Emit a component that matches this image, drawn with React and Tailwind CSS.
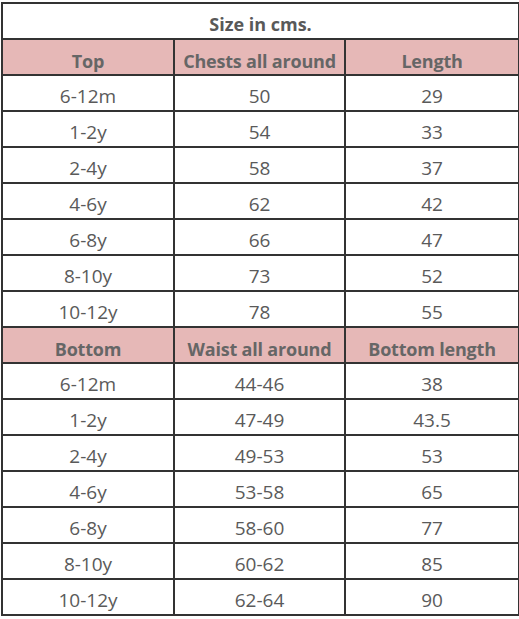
const top = [
  ["6-12m", "50", "29"],
  ["1-2y", "54", "33"],
  ["2-4y", "58", "37"],
  ["4-6y", "62", "42"],
  ["6-8y", "66", "47"],
  ["8-10y", "73", "52"],
  ["10-12y", "78", "55"],
];

const bottom = [
  ["6-12m", "44-46", "38"],
  ["1-2y", "47-49", "43.5"],
  ["2-4y", "49-53", "53"],
  ["4-6y", "53-58", "65"],
  ["6-8y", "58-60", "77"],
  ["8-10y", "60-62", "85"],
  ["10-12y", "62-64", "90"],
];

function HeaderRow({ cells }) {
  return (
    <tr className="h-[36px] bg-[#e6b8b7]">
      {cells.map((c, i) => (
        <td
          key={i}
          className="border-2 border-[#333] align-bottom pb-[4px] text-center text-[18px] font-bold tracking-[-0.2px] text-[#666]"
        >
          {c}
        </td>
      ))}
    </tr>
  );
}

function DataRow({ cells }) {
  return (
    <tr className="h-[36px]">
      {cells.map((c, i) => (
        <td
          key={i}
          className="border-2 border-[#333] align-bottom pb-[4px] text-center text-[19px] text-[#5a5a5a]"
        >
          {c}
        </td>
      ))}
    </tr>
  );
}

export default function App() {
  return (
    <div
      className="w-[519px] h-[619px] bg-white pt-[2px] pl-[1px]"
      style={{ fontFamily: "'Open Sans', Lato, sans-serif" }}
    >
      <table className="w-[517px] border-collapse table-fixed leading-none">
        <colgroup>
          <col className="w-[172px]" />
          <col className="w-[171px]" />
          <col className="w-[174px]" />
        </colgroup>
        <tbody>
          <tr className="h-[36px]">
            <td
              colSpan={3}
              className="border-2 border-[#333] align-bottom pb-[5px] text-center text-[18px] font-bold text-[#595959]"
            >
              Size in cms.
            </td>
          </tr>
          <HeaderRow cells={["Top", "Chests all around", "Length"]} />
          {top.map((r, i) => (
            <DataRow key={i} cells={r} />
          ))}
          <HeaderRow cells={["Bottom", "Waist all around", "Bottom length"]} />
          {bottom.map((r, i) => (
            <DataRow key={i} cells={r} />
          ))}
        </tbody>
      </table>
    </div>
  );
}
